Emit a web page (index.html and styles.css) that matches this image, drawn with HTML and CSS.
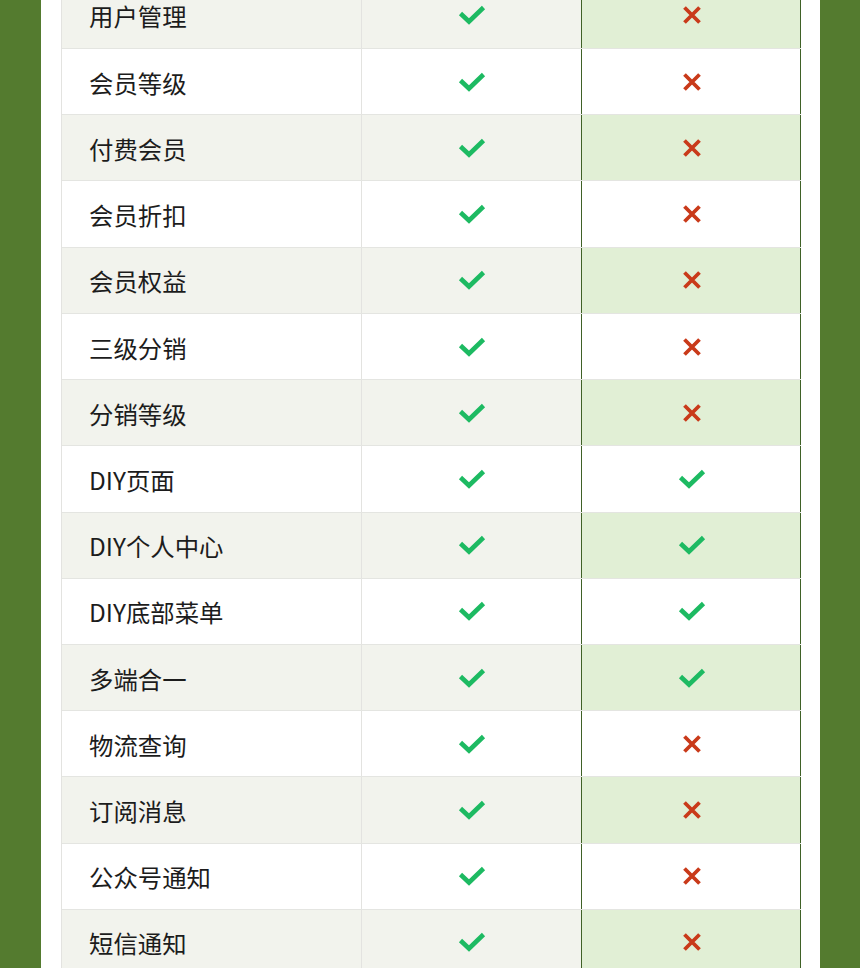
FILE: index.html
```html
<!DOCTYPE html>
<html lang="zh-CN">
<head>
<meta charset="utf-8">
<title>功能对比</title>
<link rel="stylesheet" href="styles.css">
</head>
<body>
<svg width="0" height="0" class="defs" aria-hidden="true">
  <defs>
    <symbol id="ok" viewBox="0 0 28 20"><path d="M2.5 8.5 L11 16.5 L25.5 2.5" fill="none" stroke="#1dba62" stroke-width="4.6" stroke-linejoin="miter"/></symbol>
    <symbol id="no" viewBox="0 0 20 20"><path d="M2.5 2.5 L17.5 17.5 M17.5 2.5 L2.5 17.5" fill="none" stroke="#c93a1a" stroke-width="3.8"/></symbol>
  </defs>
</svg>
<div class="page">
  <div class="panel">
    <div class="table">
      <div class="row odd"><div class="name">用户管理</div><div class="basic"><svg class="ok"><use href="#ok"/></svg></div><div class="pro"><svg class="no"><use href="#no"/></svg></div></div>
      <div class="row"><div class="name">会员等级</div><div class="basic"><svg class="ok"><use href="#ok"/></svg></div><div class="pro"><svg class="no"><use href="#no"/></svg></div></div>
      <div class="row odd"><div class="name">付费会员</div><div class="basic"><svg class="ok"><use href="#ok"/></svg></div><div class="pro"><svg class="no"><use href="#no"/></svg></div></div>
      <div class="row"><div class="name">会员折扣</div><div class="basic"><svg class="ok"><use href="#ok"/></svg></div><div class="pro"><svg class="no"><use href="#no"/></svg></div></div>
      <div class="row odd"><div class="name">会员权益</div><div class="basic"><svg class="ok"><use href="#ok"/></svg></div><div class="pro"><svg class="no"><use href="#no"/></svg></div></div>
      <div class="row"><div class="name">三级分销</div><div class="basic"><svg class="ok"><use href="#ok"/></svg></div><div class="pro"><svg class="no"><use href="#no"/></svg></div></div>
      <div class="row odd"><div class="name">分销等级</div><div class="basic"><svg class="ok"><use href="#ok"/></svg></div><div class="pro"><svg class="no"><use href="#no"/></svg></div></div>
      <div class="row"><div class="name">DIY页面</div><div class="basic"><svg class="ok"><use href="#ok"/></svg></div><div class="pro"><svg class="ok"><use href="#ok"/></svg></div></div>
      <div class="row odd"><div class="name">DIY个人中心</div><div class="basic"><svg class="ok"><use href="#ok"/></svg></div><div class="pro"><svg class="ok"><use href="#ok"/></svg></div></div>
      <div class="row"><div class="name">DIY底部菜单</div><div class="basic"><svg class="ok"><use href="#ok"/></svg></div><div class="pro"><svg class="ok"><use href="#ok"/></svg></div></div>
      <div class="row odd"><div class="name">多端合一</div><div class="basic"><svg class="ok"><use href="#ok"/></svg></div><div class="pro"><svg class="ok"><use href="#ok"/></svg></div></div>
      <div class="row"><div class="name">物流查询</div><div class="basic"><svg class="ok"><use href="#ok"/></svg></div><div class="pro"><svg class="no"><use href="#no"/></svg></div></div>
      <div class="row odd"><div class="name">订阅消息</div><div class="basic"><svg class="ok"><use href="#ok"/></svg></div><div class="pro"><svg class="no"><use href="#no"/></svg></div></div>
      <div class="row"><div class="name">公众号通知</div><div class="basic"><svg class="ok"><use href="#ok"/></svg></div><div class="pro"><svg class="no"><use href="#no"/></svg></div></div>
      <div class="row odd"><div class="name">短信通知</div><div class="basic"><svg class="ok"><use href="#ok"/></svg></div><div class="pro"><svg class="no"><use href="#no"/></svg></div></div>
    </div>
  </div>
</div>
</body>
</html>
```
FILE: styles.css
```css
html, body {
  margin: 0;
  padding: 0;
}
body {
  background: #547b2f;
  height: 968px;
  overflow: hidden;
  font-family: "Noto Sans CJK SC", "Noto Sans", sans-serif;
}
.defs {
  position: absolute;
  width: 0;
  height: 0;
}
.page {
  display: flex;
  padding-left: 41px;
}
.panel {
  width: 740px;
  background: #ffffff;
  padding: 0 19px 0 20px;
  height: 968px;
  overflow: hidden;
}
.table {
  margin-top: -17.2px;
  width: 740px;
  border-left: 1px solid #e3e3e0;
  box-sizing: border-box;
}
.row {
  display: grid;
  grid-template-columns: 300px 219px 220px;
  height: 66.23px;
  box-sizing: border-box;
  border-bottom: 1px solid #e4e5e1;
  background: #ffffff;
}
.row.odd {
  background: #f2f3ed;
}
.name {
  display: flex;
  align-items: center;
  padding-left: 27px;
  font-size: 24.4px;
  color: #1c1c1c;
  border-right: 1px solid #e3e3e0;
  padding-top: 1px;
}
.basic {
  display: flex;
  align-items: center;
  justify-content: center;
}
.pro {
  display: flex;
  align-items: center;
  justify-content: center;
  border-left: 1px solid #3f6126;
  border-right: 1px solid #3f6126;
}
.row.odd .pro {
  background: #e1efd5;
}
.ok {
  width: 28px;
  height: 20px;
  margin-left: 1px;
}
.no {
  width: 20px;
  height: 20px;
  margin-left: 1px;
}
```
